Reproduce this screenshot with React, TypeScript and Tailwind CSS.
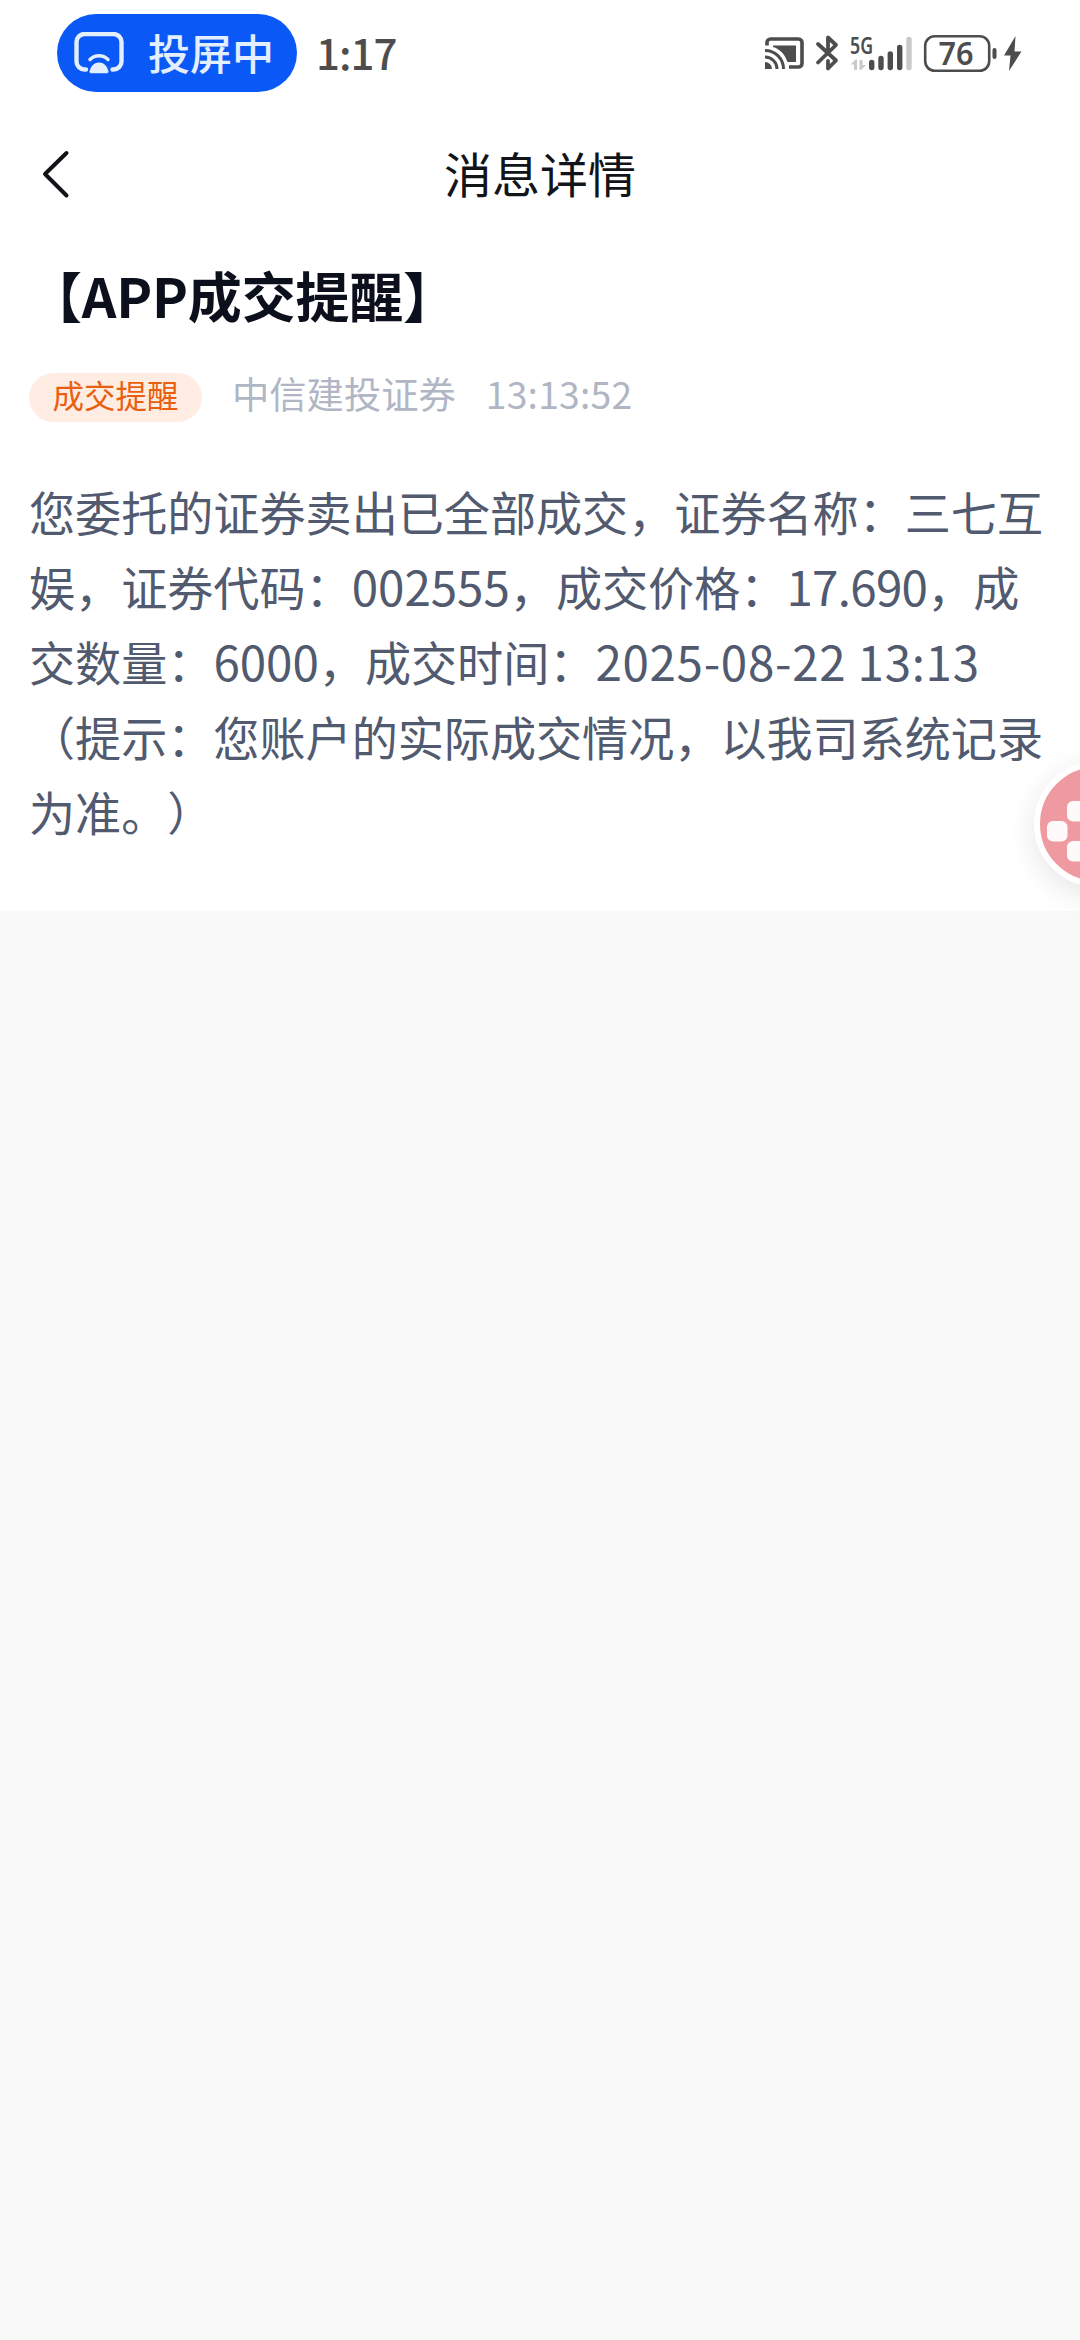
import { clsx } from "clsx";
import type { ReactNode } from "react";

const CastingIcon = () => {
    return (
        <svg width="50" height="42" viewBox="0 0 50 42" fill="none" stroke="#e3eeff" strokeWidth="4.400" strokeLinecap="round">
            <path d="M12 37.500H10.500A8 8 0 0 1 2.500 29.500V10A8 8 0 0 1 10.500 2H39.500A8 8 0 0 1 47.500 10V29.500A8 8 0 0 1 39.500 37.500H38.500" />
            <path d="M16 27.500C21 22.500 29 22.500 34 27.500" strokeWidth="3.500" />
            <path d="M15.500 39.500C17 33.500 20.500 30.500 25 30.500S33 33.500 34.500 39.500Q34.700 41.300 33 41.300H17Q15.300 41.300 15.500 39.500Z" fill="#e3eeff" stroke="none" />
        </svg>
    );
}

const StatusIcons = () => {
    return (
        <svg width="260" height="62" viewBox="764 23 260 62" fill="none">
            {/* cast */}
            <g stroke="#4d4d4d" strokeWidth="3">
                <path d="M767 45.500V42.500A3.500 3.500 0 0 1 770.500 39H798.500A3.500 3.500 0 0 1 802 42.500V63.500A3.500 3.500 0 0 1 798.500 67H789" strokeWidth="3.600" />
                <path d="M765 50.500A18.500 18.500 0 0 1 783.500 69" />
                <path d="M765 57A12 12 0 0 1 777 69" />
            </g>
            <path d="M765 62A7 7 0 0 1 772 69H765Z" fill="#4d4d4d" />
            <path d="M773 45.500H796V62H787.500C784.500 53.500 779.500 49 773 47Z" fill="#4d4d4d" />
            {/* bluetooth */}
            <path d="M818 44L836 60.500L828 68.500V61M818 62.500L836 45L828 37.500V51" stroke="#4d4d4d" strokeWidth="3.800" strokeLinecap="round" strokeLinejoin="round" />
            <text x="850" y="53.500" fontSize="23" fontWeight="600" fontFamily="Noto Sans, sans-serif" fill="#4d4d4d" textLength="23" lengthAdjust="spacingAndGlyphs">5G</text>
            {/* data arrows */}
            <path d="M850.500 64.500L855.500 59.500H857V70H854V64.500ZM859.500 60H862.500V65H866L861 70H859.500Z" fill="#cacaca" />
            {/* signal bars */}
            <g stroke="#4d4d4d" strokeWidth="5.400" strokeLinecap="round">
                <path d="M871.700 62.500V67.500M881 58.500V67.500M890.300 54V67.500M899.700 47.500V67.500" />
                <path d="M909 39.500V67.500" stroke="#cacaca" />
            </g>
            {/* battery */}
            <rect x="925.200" y="36.200" width="64" height="34.600" rx="9.500" stroke="#4d4d4d" strokeWidth="2.600" />
            <text x="938.500" y="64.500" fontSize="31.500" fontWeight="600" fontFamily="Noto Sans, sans-serif" fill="#4d4d4d" textLength="35" lengthAdjust="spacingAndGlyphs">76</text>
            <rect x="992.500" y="48" width="4" height="11" rx="2" fill="#4d4d4d" />
            <path d="M1015.500 36L1004 55.500H1010.500L1009 71L1021.500 51.500H1014.500Z" fill="#4d4d4d" />
        </svg>
    );
}

const StatusBar = () => {
    return (
        <div className="h-[106px] pt-[14px] pl-[57px] pr-14 flex items-start justify-between">
            <div className="flex items-center">
                <div className="w-[240px] h-[78px] rounded-full bg-[#0a59f7] pl-[17px] flex items-center gap-[24px]">
                    <CastingIcon />
                    <span className="pb-[3px] text-[42px] leading-none font-medium text-[#e3eeff] whitespace-nowrap">投屏中</span>
                </div>
                <span className="ml-[19px] pb-[3px] text-[42px] leading-none tracking-[-1px] font-medium text-[#4d4d4d]">1:17</span>
            </div>
            <div className="mt-[9px]">
                <StatusIcons />
            </div>
        </div>
    );
}

const Header = () => {
    return (
        <div className="h-[136px] px-[42px] grid grid-cols-3 items-center">
            <svg width="28" height="50" viewBox="0 0 28 50" fill="none" stroke="#111418" strokeWidth="4" strokeLinecap="round" strokeLinejoin="round">
                <path d="M24.500 4L3 25L24.500 46.500" />
            </svg>
            <h1 className="pb-[5px] text-center text-[48px] leading-none text-[#111418]">消息详情</h1>
        </div>
    );
}

const Num = ({ children, className }: { children: ReactNode; className?: string }) => {
    return <span className={clsx("text-[47.500px] leading-none", className)}>{children}</span>;
}

const Message = () => {
    return (
        <div className="h-[669px] px-[30px] pt-[21px]">
            <h2 className="-ml-[2px] text-[54px] leading-[64px] tracking-[-0.2px] font-bold text-[#0b101c] whitespace-nowrap">【APP成交提醒】</h2>
            <div className="mt-[44px] h-[52px] flex items-center">
                <span className="w-[173px] h-[49px] rounded-full bg-[#ffede4] text-[#e8600f] text-[31.500px] leading-[43px] text-center -ml-px">成交提醒</span>
                <span className="ml-[30px] -mt-[7px] text-[37.300px] leading-none text-[#b0b6c3]">中信建投证券</span>
                <span className="ml-[30px] -mt-[7px] text-[37.300px] leading-none tracking-[0.2px] text-[#b0b6c3]">13:13:52</span>
            </div>
            <div className="mt-[51px] -ml-px text-[46.100px] leading-[75px] text-[#515a6e] whitespace-nowrap [text-spacing-trim:space-all]">
                <p>您委托的证券卖出已全部成交，证券名称：三七互</p>
                <p>娱，证券代码：<Num>002555</Num>，成交价格：<Num className="tracking-[-0.7px]">17.690</Num>，成</p>
                <p>交数量：<Num>6000</Num>，成交时间：<Num className="tracking-[0.7px]">2025-08-22 13:13</Num></p>
                <p>（提示：您账户的实际成交情况，以我司系统记录</p>
                <p>为准。）</p>
            </div>
        </div>
    );
}

const FloatingButton = () => {
    return (
        <button className="absolute top-[761px] left-[1034px] size-[126px] rounded-full border-[6px] border-white bg-[#ef99a0] shadow-[0_8px_30px_rgba(0,0,0,0.1)]">
            <svg width="114" height="114" viewBox="0 0 114 114" fill="#fffafa">
                <rect x="7" y="54" width="20.500" height="20.500" rx="6" />
                <rect x="27" y="34" width="20.500" height="20.500" rx="6" />
                <rect x="27" y="74" width="20.500" height="20.500" rx="6" />
            </svg>
        </button>
    );
}

export default function App() {
    return (
        <div lang="zh-CN" className="relative w-[1080px] h-[2340px] overflow-hidden bg-[#f9f9f9] font-['Noto_Sans_CJK_SC',sans-serif]">
            <div className="bg-white">
                <StatusBar />
                <Header />
                <Message />
            </div>
            <FloatingButton />
        </div>
    );
}
